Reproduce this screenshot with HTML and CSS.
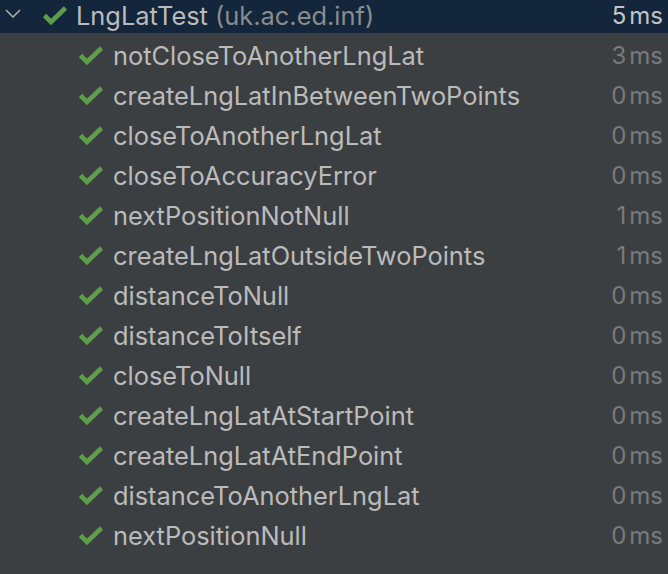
FILE: index.html
```html
<!DOCTYPE html>
<html>
<head>
<meta charset="utf-8">
<link rel="stylesheet" href="styles.css">
</head>
<body>
<div class="tree">
  <div class="row head">
    <svg class="chev" width="16" height="9" viewBox="0 0 16 9"><polyline points="1,1 8,8 15,1" fill="none" stroke="#a9abad" stroke-width="1.6"/></svg>
    <svg class="check big" width="26" height="19" viewBox="0 0 26 19"><polyline points="2.5,9.5 9,16 23.5,2" fill="none" stroke="#5e9e4b" stroke-width="4.6"/></svg>
    <span class="name">LngLatTest <span class="pkg">(uk.ac.ed.inf)</span></span>
    <span class="time">5<span class="unit">ms</span></span>
  </div>
  <div class="row child"><svg class="check" width="26" height="19" viewBox="0 0 26 19"><polyline points="2.5,9.5 9,16 23.5,2" fill="none" stroke="#5e9e4b" stroke-width="4.6"/></svg><span class="name">notCloseToAnotherLngLat</span><span class="time">3<span class="unit">ms</span></span></div>
  <div class="row child"><svg class="check" width="26" height="19" viewBox="0 0 26 19"><polyline points="2.5,9.5 9,16 23.5,2" fill="none" stroke="#5e9e4b" stroke-width="4.6"/></svg><span class="name">createLngLatInBetweenTwoPoints</span><span class="time">0<span class="unit">ms</span></span></div>
  <div class="row child"><svg class="check" width="26" height="19" viewBox="0 0 26 19"><polyline points="2.5,9.5 9,16 23.5,2" fill="none" stroke="#5e9e4b" stroke-width="4.6"/></svg><span class="name">closeToAnotherLngLat</span><span class="time">0<span class="unit">ms</span></span></div>
  <div class="row child"><svg class="check" width="26" height="19" viewBox="0 0 26 19"><polyline points="2.5,9.5 9,16 23.5,2" fill="none" stroke="#5e9e4b" stroke-width="4.6"/></svg><span class="name">closeToAccuracyError</span><span class="time">0<span class="unit">ms</span></span></div>
  <div class="row child"><svg class="check" width="26" height="19" viewBox="0 0 26 19"><polyline points="2.5,9.5 9,16 23.5,2" fill="none" stroke="#5e9e4b" stroke-width="4.6"/></svg><span class="name">nextPositionNotNull</span><span class="time">1<span class="unit">ms</span></span></div>
  <div class="row child"><svg class="check" width="26" height="19" viewBox="0 0 26 19"><polyline points="2.5,9.5 9,16 23.5,2" fill="none" stroke="#5e9e4b" stroke-width="4.6"/></svg><span class="name">createLngLatOutsideTwoPoints</span><span class="time">1<span class="unit">ms</span></span></div>
  <div class="row child"><svg class="check" width="26" height="19" viewBox="0 0 26 19"><polyline points="2.5,9.5 9,16 23.5,2" fill="none" stroke="#5e9e4b" stroke-width="4.6"/></svg><span class="name">distanceToNull</span><span class="time">0<span class="unit">ms</span></span></div>
  <div class="row child"><svg class="check" width="26" height="19" viewBox="0 0 26 19"><polyline points="2.5,9.5 9,16 23.5,2" fill="none" stroke="#5e9e4b" stroke-width="4.6"/></svg><span class="name">distanceToItself</span><span class="time">0<span class="unit">ms</span></span></div>
  <div class="row child"><svg class="check" width="26" height="19" viewBox="0 0 26 19"><polyline points="2.5,9.5 9,16 23.5,2" fill="none" stroke="#5e9e4b" stroke-width="4.6"/></svg><span class="name">closeToNull</span><span class="time">0<span class="unit">ms</span></span></div>
  <div class="row child"><svg class="check" width="26" height="19" viewBox="0 0 26 19"><polyline points="2.5,9.5 9,16 23.5,2" fill="none" stroke="#5e9e4b" stroke-width="4.6"/></svg><span class="name">createLngLatAtStartPoint</span><span class="time">0<span class="unit">ms</span></span></div>
  <div class="row child"><svg class="check" width="26" height="19" viewBox="0 0 26 19"><polyline points="2.5,9.5 9,16 23.5,2" fill="none" stroke="#5e9e4b" stroke-width="4.6"/></svg><span class="name">createLngLatAtEndPoint</span><span class="time">0<span class="unit">ms</span></span></div>
  <div class="row child"><svg class="check" width="26" height="19" viewBox="0 0 26 19"><polyline points="2.5,9.5 9,16 23.5,2" fill="none" stroke="#5e9e4b" stroke-width="4.6"/></svg><span class="name">distanceToAnotherLngLat</span><span class="time">0<span class="unit">ms</span></span></div>
  <div class="row child"><svg class="check" width="26" height="19" viewBox="0 0 26 19"><polyline points="2.5,9.5 9,16 23.5,2" fill="none" stroke="#5e9e4b" stroke-width="4.6"/></svg><span class="name">nextPositionNull</span><span class="time">0<span class="unit">ms</span></span></div>
</div>
</body>
</html>
```
FILE: styles.css
```css
html, body {
  margin: 0;
  padding: 0;
  background: #3c3f41;
  width: 668px;
  height: 574px;
  overflow: hidden;
}
.tree {
  font-family: Inter, "Noto Sans", sans-serif;
  font-size: 25.4px;
  color: #bbbbbb;
  display: flex;
  flex-direction: column;
}
.row {
  display: flex;
  align-items: center;
  height: 40px;
  padding-right: 5px;
  white-space: nowrap;
}
.head {
  height: 33px;
  padding-bottom: 3px;
  box-sizing: border-box;
  background: #13263c;
  margin-bottom: 2px;
}
.chev {
  margin-left: 5px;
  margin-right: 21px;
  margin-top: -4px;
}
.check {
  flex: none;
  margin-right: 9px;
}
.head .check { margin-right: 8px; }
.child { padding-left: 78px; }
.name { flex: 1; }
.pkg { color: #8c8c8c; }
.time {
  color: #7a7a7a;
  font-size: 24px;
}
.head .time { color: #c4c4c4; }
.unit { margin-left: 3px; }
```
